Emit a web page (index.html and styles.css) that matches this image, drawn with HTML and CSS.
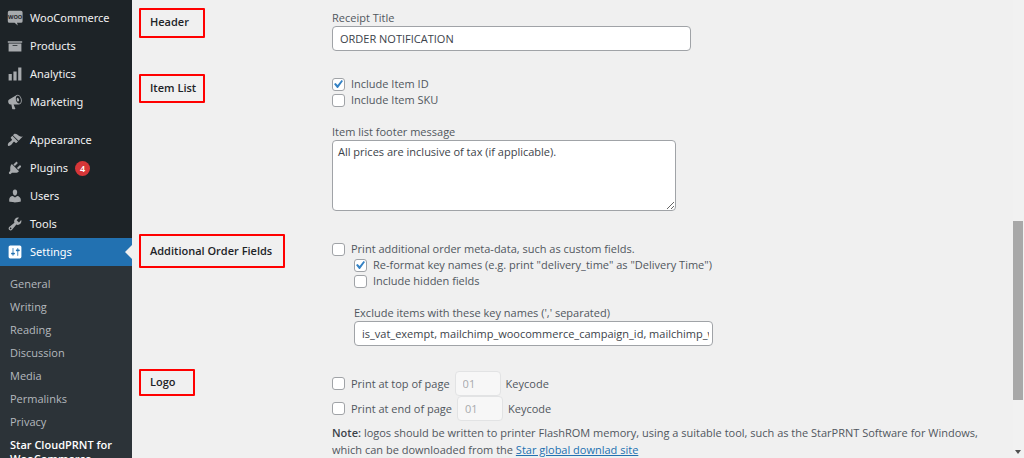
FILE: index.html
```html
<!DOCTYPE html>
<html lang="en">
<head>
<meta charset="utf-8">
<title>Star CloudPRNT for WooCommerce</title>
<link rel="stylesheet" href="styles.css">
</head>
<body>
<div class="app">
  <nav class="sidebar" aria-label="Main menu">
    <ul class="menu">
      <li><a class="menu-link" href="#"><svg class="icon" viewBox="0 0 20 20"><path d="M3 1h14.500a2 2 0 0 1 2 2v11a2 2 0 0 1-2 2h-5l1 3.500L9.500 16H3a2 2 0 0 1-2-2V3a2 2 0 0 1 2-2z"/><text class="woo-mark" x="10.200" y="11" text-anchor="middle">WOO</text></svg>WooCommerce</a></li>
      <li><a class="menu-link" href="#"><svg class="icon" viewBox="0 0 20 20"><path d="M19 4v2H1V4h18zM2 7h16v10H2V7zm11 3V9H7v1h6z"/></svg>Products</a></li>
      <li><a class="menu-link" href="#"><svg class="icon" viewBox="0 0 20 20"><path d="M18 18V2h-4v16h4zm-6 0V7H8v11h4zm-10 0h4v-8H2v8z"/></svg>Analytics</a></li>
      <li><a class="menu-link" href="#"><svg class="icon" viewBox="0 0 20 20"><path d="M18.150 5.940c.46 1.620.38 3.220-.02 4.480-.42 1.280-1.260 2.180-2.300 2.480-.16.060-.26.060-.4.060-.06.020-.12.020-.18.020-.06.020-.14.020-.22.020h-6.800l2.220 5.500c.02.140-.06.260-.14.340-.08.100-.24.160-.34.160H6.950c-.1 0-.26-.06-.34-.16-.08-.08-.16-.2-.14-.34l-1-5.500H4.250l-.02-.02c-.5.060-1.080-.18-1.540-.62s-.88-1.080-1.060-1.880c-.24-.8-.2-1.560-.02-2.200.18-.62.580-1.080 1.060-1.300l.02-.02 9-5.400c.1-.06.180-.1.240-.16.060-.04.140-.08.240-.12.160-.08.280-.12.500-.18 1.040-.3 2.240.1 3.220.98s1.840 2.240 2.260 3.860zm-2.580 5.980h-.02c.4-.1.740-.34 1.040-.7.580-.7.860-1.760.860-3.040 0-.64-.1-1.300-.28-1.980-.34-1.360-1.020-2.500-1.780-3.240s-1.680-1.100-2.460-.88c-.82.220-1.400.96-1.700 2-.32 1.040-.28 2.360.060 3.720.38 1.360 1 2.500 1.800 3.240.78.740 1.620 1.100 2.480.88zm-2.540-7.080c.22-.04.420-.02.620.04.380.16.760.48 1.020 1s.420 1.200.420 1.780c0 .3-.04.560-.12.800-.18.480-.44.840-.86.940-.34.100-.8-.06-1.140-.4s-.64-.86-.78-1.500c-.18-.62-.12-1.240.02-1.720s.48-.84.820-.94z"/></svg>Marketing</a></li>
    </ul>
    <ul class="menu">
      <li><a class="menu-link" href="#"><svg class="icon" viewBox="0 0 20 20"><path d="M14.480 11.060L7.410 3.990l1.500-1.500c.5-.56 2.300-.47 3.510.32 1.210.8 1.430 1.280 2.910 2.100 1.180.64 2.450 1.260 4.450.85zm-.71.71L6.700 4.700 4.930 6.470c-.39.390-.39 1.020 0 1.410l1.060 1.060c.39.390.39 1.030 0 1.420-.6.600-1.430 1.110-2.210 1.690-.35.260-.7.530-1.010.84C1.430 14.230.4 16.080 1.400 17.070c.99 1 2.840-.03 4.180-1.360.31-.31.580-.66.850-1.020.57-.78 1.080-1.610 1.690-2.210.39-.39 1.020-.39 1.410 0l1.060 1.060c.39.390 1.020.39 1.410 0z"/></svg>Appearance</a></li>
      <li><a class="menu-link" href="#"><svg class="icon" viewBox="0 0 20 20"><path d="M13.110 4.360L9.870 7.600 8 5.730l3.240-3.240c.35-.34 1.050-.2 1.560.32.520.51.660 1.210.31 1.550zm-8 1.770l.91-1.120 9.010 9.010-1.190.84c-.71.710-2.630 1.160-3.820 1.160H6.140L4.900 17.260c-.59.590-1.540.59-2.120 0-.59-.58-.59-1.530 0-2.120l1.240-1.240v-3.880c0-1.130.4-3.190 1.090-3.890zm7.260 3.970l3.240-3.240c.34-.35 1.040-.21 1.550.31.520.51.660 1.210.31 1.550l-3.240 3.250z"/></svg>Plugins<span class="count">4</span></a></li>
      <li><a class="menu-link" href="#"><svg class="icon" viewBox="0 0 20 20"><path d="M10 9.250c-2.270 0-2.730-3.440-2.730-3.440C7 4.020 7.820 2 9.970 2c2.160 0 2.980 2.020 2.710 3.810 0 0-.41 3.440-2.680 3.440zm0 2.570L12.720 10c2.390 0 4.520 2.330 4.520 4.530v2.490s-3.650 1.130-7.240 1.130c-3.650 0-7.240-1.130-7.240-1.130v-2.490c0-2.250 1.940-4.480 4.470-4.480z"/></svg>Users</a></li>
      <li><a class="menu-link" href="#"><svg class="icon" viewBox="0 0 20 20"><path d="M16.680 9.770c-1.340 1.340-3.300 1.670-4.950.99l-5.410 6.520c-.99.990-2.590.99-3.580 0s-.99-2.590 0-3.570l6.520-5.420c-.68-1.650-.35-3.610.99-4.950 1.280-1.280 3.120-1.620 4.720-1.060l-2.890 2.890 2.820 2.820 2.860-2.870c.53 1.580.18 3.390-1.080 4.650zM3.810 16.210c.4.390 1.040.39 1.430 0 .4-.4.4-1.040 0-1.430-.39-.4-1.030-.4-1.430 0-.39.390-.39 1.030 0 1.430z"/></svg>Tools</a></li>
      <li><a class="menu-link current" href="#" aria-current="true"><svg class="icon" viewBox="0 0 20 20"><path d="M18 16V4c0-1.100-.9-2-2-2H4c-1.100 0-2 .9-2 2v12c0 1.100.9 2 2 2h12c1.100 0 2-.9 2-2zM8 11h1c.55 0 1 .45 1 1s-.45 1-1 1H8v1.500c0 .28-.22.500-.5.500s-.5-.22-.5-.5V13H6c-.55 0-1-.45-1-1s.45-1 1-1h1V5.500c0-.28.220-.5.500-.5s.5.220.5.500V11zm5-2h-1c-.55 0-1-.45-1-1s.45-1 1-1h1V5.500c0-.28.220-.5.500-.5s.5.220.5.500V7h1c.55 0 1 .45 1 1s-.45 1-1 1h-1v5.500c0 .28-.22.500-.5.500s-.5-.22-.5-.5V9z"/></svg>Settings</a></li>
    </ul>
    <ul class="submenu">
      <li><a class="sub-link" href="#">General</a></li>
      <li><a class="sub-link" href="#">Writing</a></li>
      <li><a class="sub-link" href="#">Reading</a></li>
      <li><a class="sub-link" href="#">Discussion</a></li>
      <li><a class="sub-link" href="#">Media</a></li>
      <li><a class="sub-link" href="#">Permalinks</a></li>
      <li><a class="sub-link" href="#">Privacy</a></li>
      <li><a class="sub-link active" href="#">Star CloudPRNT for WooCommerce</a></li>
    </ul>
  </nav>

  <main class="content">
    <section class="row">
      <div class="row-head"><h2 class="mark mark-header">Header</h2></div>
      <div class="fields">
        <label class="caption" for="title">Receipt Title</label>
        <input class="text" id="title" type="text" value="ORDER NOTIFICATION">
      </div>
    </section>

    <section class="row">
      <div class="row-head"><h2 class="mark mark-list">Item List</h2></div>
      <div class="fields">
        <label class="check"><input type="checkbox" checked>Include Item ID</label>
        <label class="check"><input type="checkbox">Include Item SKU</label>
        <label class="caption spaced" for="footer">Item list footer message</label>
        <textarea class="area" id="footer">All prices are inclusive of tax (if applicable).</textarea>
      </div>
    </section>

    <section class="row">
      <div class="row-head"><h2 class="mark mark-fields">Additional Order Fields</h2></div>
      <div class="fields fields-low">
        <label class="check"><input type="checkbox">Print additional order meta-data, such as custom fields.</label>
        <div class="nested">
          <label class="check"><input type="checkbox" checked>Re-format key names (e.g. print "delivery_time" as "Delivery Time")</label>
          <label class="check"><input type="checkbox">Include hidden fields</label>
          <label class="caption spaced" for="exclude">Exclude items with these key names (',' separated)</label>
          <input class="text" id="exclude" type="text" value="is_vat_exempt, mailchimp_woocommerce_campaign_id, mailchimp_woocommerce_landing_site">
        </div>
      </div>
    </section>

    <section class="row">
      <div class="row-head"><h2 class="mark mark-logo">Logo</h2></div>
      <div class="fields">
        <div class="logo-line">
          <label class="check"><input type="checkbox">Print at top of page</label>
          <input class="text code" id="top-code" type="text" value="01" disabled>
          <label for="top-code">Keycode</label>
        </div>
        <div class="logo-line">
          <label class="check"><input type="checkbox">Print at end of page</label>
          <input class="text code" id="end-code" type="text" value="01" disabled>
          <label for="end-code">Keycode</label>
        </div>
        <p class="note"><strong>Note:</strong> logos should be written to printer FlashROM memory, using a suitable tool, such as the StarPRNT Software for Windows, which can be downloaded from the <a href="#">Star global downlad site</a></p>
      </div>
    </section>
  </main>

  <div class="scrollbar" aria-hidden="true">
    <div class="thumb"></div>
    <svg class="arrow" viewBox="0 0 6 4"><path d="M0 0h6L3 4z"/></svg>
  </div>
</div>
</body>
</html>
```

FILE: styles.css
```css
* { box-sizing: border-box; }

body {
  margin: 0;
  background: #f0f0f0;
  color: #50575e;
  font: 11px/16px "Open Sans", "Noto Sans", sans-serif;
}

.app {
  display: flex;
  height: 100vh;
  overflow: hidden;
}

/* Sidebar */
.sidebar {
  flex: 0 0 132px;
  display: flex;
  flex-direction: column;
  padding-top: 4px;
  background: #1d2327;
}

.menu,
.submenu {
  margin: 0;
  padding: 0;
  list-style: none;
}

.menu + .menu { margin-top: 10px; }

.menu-link {
  position: relative;
  display: flex;
  align-items: center;
  gap: 7px;
  height: 28px;
  padding-left: 7px;
  color: #f0f0f1;
  font-family: "Noto Sans", "Open Sans", sans-serif;
  font-size: 11px;
  text-decoration: none;
}

.icon {
  width: 16px;
  height: 16px;
  fill: #a7aaad;
}

.woo-mark {
  fill: #1d2327;
  font: bold 7px "Open Sans", sans-serif;
}

.current {
  background: #2271b1;
  color: #fff;
}

.current .icon { fill: #fff; }

.current::after {
  content: "";
  position: absolute;
  right: 0;
  top: 7px;
  border: 7px solid transparent;
  border-left: 0;
  border-right-color: #f0f0f0;
}

.count {
  width: 15px;
  height: 15px;
  border-radius: 50%;
  background: #d63638;
  color: #fff;
  font-size: 9px;
  font-weight: 600;
  line-height: 15px;
  text-align: center;
}

.submenu {
  flex: 1;
  padding-top: 6px;
  background: #2c3338;
}

.sub-link {
  display: block;
  padding: 5px 10px 4px;
  color: #b4b9be;
  line-height: 14px;
  text-decoration: none;
}

.active {
  color: #fff;
  font-weight: 600;
}

/* Settings form */
.content {
  flex: 1;
  min-width: 0;
  display: flex;
  flex-direction: column;
  gap: 23px;
  padding: 8px 24px 0 7px;
}

.row {
  display: flex;
  align-items: flex-start;
}

.row-head { flex: 0 0 193px; }

.mark {
  display: flex;
  align-items: center;
  margin: 0;
  padding-left: 9px;
  border: 2px solid #f00;
  border-radius: 1px;
  color: #1d2327;
  font-size: 11px;
  font-weight: 600;
}

.mark-header { width: 66px; height: 30px; padding-bottom: 3px; }
.mark-list { width: 66px; height: 29px; padding-bottom: 2px; }
.mark-fields { width: 146px; height: 34px; }
.mark-logo { width: 56px; height: 27px; padding-bottom: 1px; }

.fields {
  flex: 1;
  min-width: 0;
  padding-top: 2px;
}

.fields-low { padding-top: 7px; }

.nested { padding-left: 22px; }

.caption { display: block; }

.spaced { margin-top: 16px; }

.text,
.area {
  display: block;
  max-width: 100%;
  border: 1px solid #a0a3a7;
  border-radius: 4px;
  background: #fff;
  color: #3c434a;
  font: inherit;
}

.text {
  width: 359px;
  height: 25px;
  padding: 0 3px 0 7px;
}

.area {
  width: 344px;
  height: 71px;
  padding: 3px 5px;
}

.check {
  display: flex;
  align-items: center;
  gap: 6px;
}

.check input {
  appearance: none;
  flex: none;
  display: grid;
  place-items: center;
  width: 13px;
  height: 13px;
  margin: 0;
  border: 1px solid #a0a3a7;
  border-radius: 3px;
  background: #fff;
}

.check input:checked::before {
  content: "";
  width: 9px;
  height: 8px;
  background: #3582c4;
  clip-path: polygon(0 50%, 18% 36%, 40% 62%, 84% 0, 100% 12%, 44% 100%, 34% 100%);
}

.logo-line {
  display: flex;
  align-items: center;
  gap: 5px;
}

.code {
  width: 46px;
  border-color: #e2e3e4;
  background: #f7f7f7;
  color: #a7aaad;
}

.note {
  margin: 3px 0 0;
  line-height: 17px;
}

.note strong { font-weight: 600; color: #3c434a; }

.note a { color: #2271b1; }

/* Scroll track */
.scrollbar {
  flex: 0 0 11px;
  display: flex;
  flex-direction: column;
  align-items: center;
  justify-content: space-between;
  padding: 221px 1px 4px 0;
  background: #f1f1f1;
}

.thumb {
  width: 10px;
  height: 179px;
  background: #a8a8a8;
}

.arrow {
  width: 6px;
  height: 4px;
  fill: #505050;
}
```
